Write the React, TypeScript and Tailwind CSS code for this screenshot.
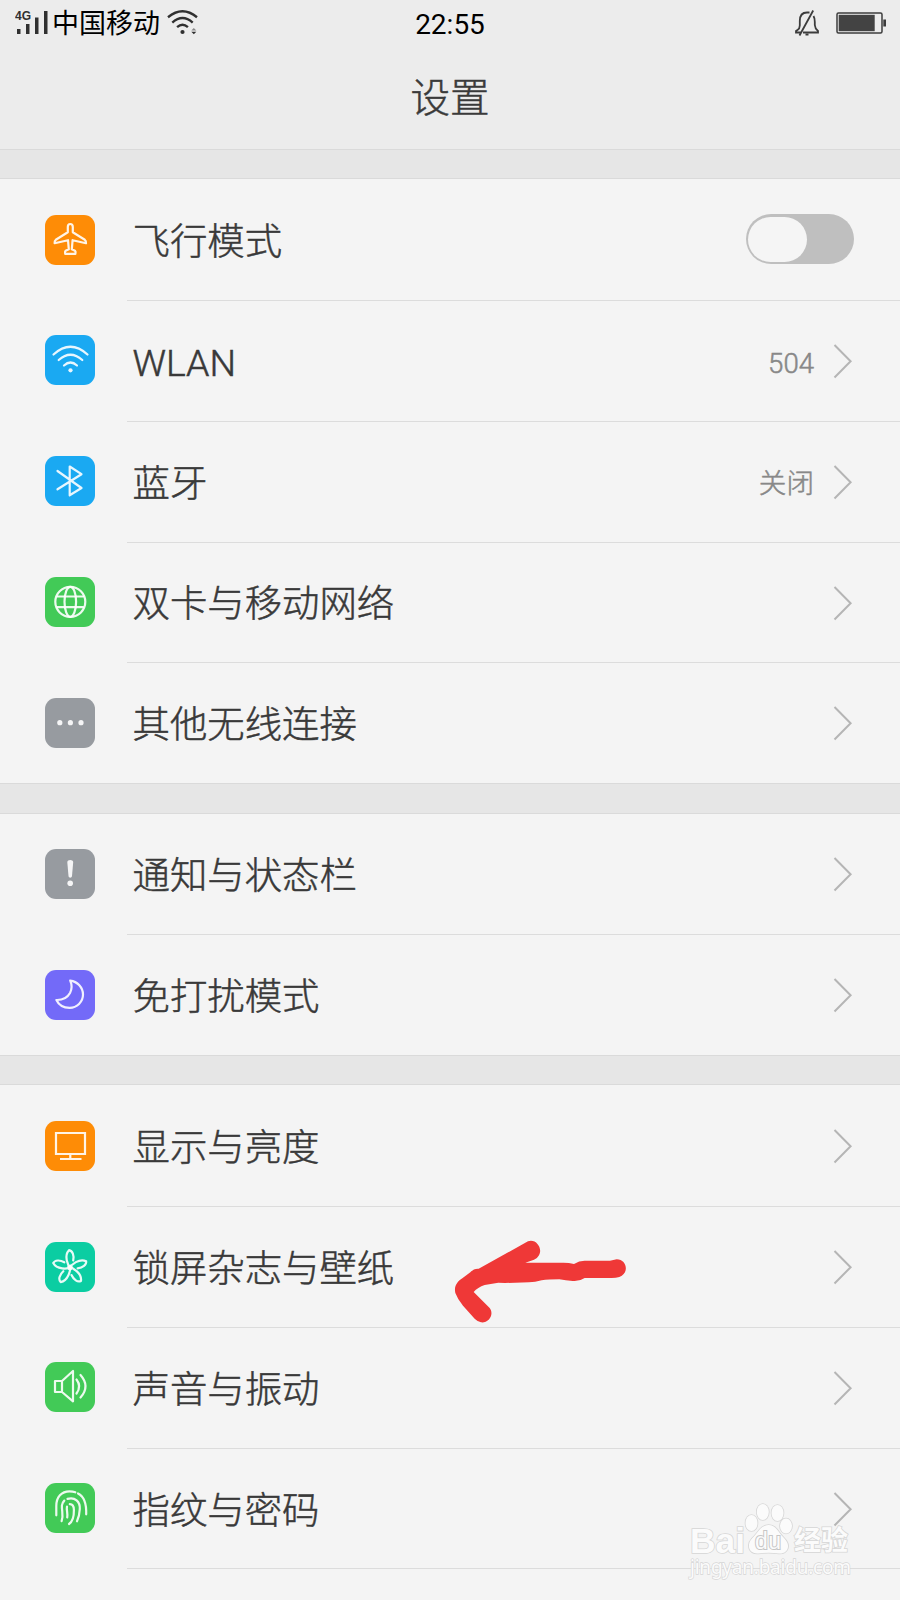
import type { ReactNode } from "react"

interface SettingItem {
  label: string
  color: string
  icon: ReactNode
  value?: string
  toggle?: boolean
}

const PETAL = "M26 27C22.5 23.5 18.8 13.5 24 8.2C27.6 8.8 29.3 13.5 28.2 18.5"

const sections: SettingItem[][] = [
  [
    {
      label: "飞行模式",
      color: "bg-[#fe8c06]",
      toggle: true,
      icon: (
        <path d="M25.2 9C23.6 9 22.8 10.2 22.8 12V17.3L10.8 24.8Q9.4 25.8 9.6 28.2L23 25.2L23.8 34.3L20.6 35.8Q19.6 37 20.2 38.8H30.4Q31 37 30 35.8L26.8 34.3L27.6 25.2L41 28.2Q41.2 25.8 39.8 24.8L27.8 17.3V12C27.8 10.2 26.8 9 25.2 9Z" />
      ),
    },
    {
      label: "WLAN",
      color: "bg-[#1aa9f2]",
      value: "504",
      icon: (
        <>
          <path d="M8.5 19.5Q25.5 4 42.5 19.5M13.7 25Q25.5 14.5 37.3 25M19 30.5Q25.5 24.5 32 30.5" />
          <circle cx="25.5" cy="35.3" r="2.1" fill="currentColor" stroke="none" />
        </>
      ),
    },
    {
      label: "蓝牙",
      color: "bg-[#1aa9f2]",
      value: "关闭",
      icon: <path d="M12.5 15L36.5 32L24.7 39.3V10.5L36.5 18.2L12.5 33.3" />,
    },
    {
      label: "双卡与移动网络",
      color: "bg-[#42ca57]",
      icon: (
        <>
          <circle cx="25.3" cy="24.8" r="15" />
          <ellipse cx="25.3" cy="24.8" rx="5.8" ry="15" />
          <path d="M12.5 19.5H38M12.5 30.2H38" />
        </>
      ),
    },
    {
      label: "其他无线连接",
      color: "bg-[#979ba0]",
      icon: (
        <g fill="currentColor" stroke="none">
          <circle cx="14.8" cy="24.7" r="2.6" />
          <circle cx="25.4" cy="24.7" r="2.6" />
          <circle cx="36" cy="24.7" r="2.6" />
        </g>
      ),
    },
  ],
  [
    {
      label: "通知与状态栏",
      color: "bg-[#979ba0]",
      icon: (
        <g fill="currentColor" stroke="none">
          <path d="M22.3 13C22.3 10.2 28.2 10.2 28.2 13L27 27C26.7 29.2 23.8 29.2 23.5 27Z" />
          <circle cx="25.2" cy="34.2" r="2.8" />
        </g>
      ),
    },
    {
      label: "免打扰模式",
      color: "bg-[#736af8]",
      icon: (
        <path d="M25.2 10.6C32.5 11.5 38 17.5 38 24.6C38 32 32 37.8 24.6 37.8C18.5 37.8 13.8 35 11.4 30C17.5 30.2 22.5 27.5 25 23C27 19 27 14.5 25.2 10.6Z" />
      ),
    },
  ],
  [
    {
      label: "显示与亮度",
      color: "bg-[#fe8c06]",
      icon: <path d="M11 12H40V33H11ZM25.3 33V37.5M15 38H36.5" strokeLinejoin="miter" strokeLinecap="butt" />,
    },
    {
      label: "锁屏杂志与壁纸",
      color: "bg-[#0bcda2]",
      icon: (
        <>
          <path d={PETAL} />
          <path d={PETAL} transform="rotate(72 25 25.5)" />
          <path d={PETAL} transform="rotate(144 25 25.5)" />
          <path d={PETAL} transform="rotate(216 25 25.5)" />
          <path d={PETAL} transform="rotate(288 25 25.5)" />
        </>
      ),
    },
    {
      label: "声音与振动",
      color: "bg-[#42ca57]",
      icon: (
        <path d="M10 19H17V30H10ZM17 19L28 9V39.3L17 30M31.5 17.5Q36.8 24.3 31.5 31.5M35.5 13Q45.5 24.3 35.5 35.5" />
      ),
    },
    {
      label: "指纹与密码",
      color: "bg-[#42ca57]",
      icon: (
        <>
          <path d="M11.3 32.3V23C11.3 14 16.5 8.3 24.5 8.3C27 8.3 28.8 8.7 30.3 9.3M33 10.4C40.5 14 41.5 22.5 41.2 31.3" />
          <path d="M16.6 38.2C18.8 32 16.6 28.5 16.9 22.5Q17.2 19.7 19.3 17.6M22.5 15.9C30 13.8 35.2 18.5 34.8 26Q34.5 33 32 38.3" />
          <path d="M22.2 34.5C23 30 21.2 27 22 23.5M24.8 21.2C28 21.2 28.9 23.5 28.9 27C29 33 27.8 38.5 24 41" />
        </>
      ),
    },
  ],
]

const StatusBar = () => (
  <div className="flex h-[46px] items-center justify-between pr-[13px] pl-[15px]">
    <div className="flex w-[380px] items-center">
      <svg width="36" height="26" viewBox="0 0 36 26" fill="#303030">
        <text x="0" y="10" fontSize="12" fontWeight="700" fontFamily="Liberation Sans">
          4G
        </text>
        <rect x="2" y="19" width="3.5" height="5" />
        <rect x="11" y="14" width="3.5" height="10" />
        <rect x="20" y="7.5" width="3.5" height="16.5" />
        <rect x="29" y="1" width="3.5" height="23" />
      </svg>
      <span className="mt-[2px] ml-[1px] text-[27px] leading-none text-black">中国移动</span>
      <svg className="ml-[6px]" width="34" height="26" viewBox="0 0 34 26" fill="none" stroke="#303030" strokeWidth="2.4">
        <path d="M2 7.2Q16.5-4.6 31 7.2M6.3 12.6Q16.5 3.6 26.7 12.6M11.1 17.2Q16.5 12.4 21.9 17.2" />
        <circle cx="16.5" cy="22" r="2.1" fill="#303030" stroke="none" />
        <path d="M25.3 20.6L27.8 18L30.3 20.6Z" fill="#888" stroke="none" />
        <path d="M25.3 21.8L27.8 24.2L30.3 21.8Z" fill="#303030" stroke="none" />
      </svg>
    </div>
    <span className="mt-[4px] mr-[2px] text-[28px] leading-none text-black">22:55</span>
    <div className="flex w-[380px] items-center justify-end">
      <svg width="26" height="28" viewBox="0 0 26 28" fill="none" stroke="#3c3c3c" strokeWidth="1.8">
        <path d="M3.5 21Q5.8 19.5 5.8 16.5V12C5.8 6 8 3.5 13 3.5H15.5M19.5 7Q20.8 9 20.8 13V16Q21 19.5 24 22V23.5H9M6.5 23.5H2V22L3.5 21M19.2 1.5L5.5 26.5M11.5 25.6H14.5" />
      </svg>
      <svg className="ml-[16px]" width="51" height="24" viewBox="0 0 51 24" fill="none">
        <rect x="1" y="2" width="45" height="20" rx="1.5" stroke="#3c3c3c" strokeWidth="1.5" />
        <rect x="2.7" y="3.8" width="36" height="16.4" fill="#434343" />
        <rect x="47.3" y="8.5" width="2.7" height="7" fill="#3c3c3c" />
      </svg>
    </div>
  </div>
)

const Toggle = () => (
  <div className="mr-[46px] mb-[2px] h-[50px] w-[108px] rounded-full bg-[#bfbfbf] py-[2.5px] pl-[2px]">
    <div className="h-[45px] w-[59px] rounded-full bg-[#f5f5f5]" />
  </div>
)

const Chevron = () => (
  <svg className="mr-[47px] ml-[19px]" width="20" height="36" viewBox="0 0 20 36" fill="none" stroke="#b5b5b5" strokeWidth="2">
    <path d="M1.5 2L17.6 18.2L1.5 34.5" />
  </svg>
)

const Row = ({ item, first }: { item: SettingItem; first: boolean }) => (
  <div className="flex h-[120.8px] items-stretch pl-[45px]">
    <div className={`mr-[32px] h-[50px] w-[50px] shrink-0 self-center rounded-[11px] ${item.color}`}>
      <svg
        className="text-white/90"
        width="50"
        height="50"
        viewBox="0 0 50 50"
        fill="none"
        stroke="currentColor"
        strokeWidth="2.2"
        strokeLinecap="round"
        strokeLinejoin="round"
      >
        {item.icon}
      </svg>
    </div>
    <div className={`flex flex-1 items-center border-t pl-[5.5px] ${first ? "border-transparent" : "border-[#dcdcdc]"}`}>
      <span className="flex-1 pt-[5px] text-[37.4px] leading-none font-light text-[#393939] [-webkit-text-stroke:0.5px_#393939]">
        {item.label}
      </span>
      {item.toggle ? (
        <Toggle />
      ) : (
        <>
          <span className="pt-[5px] text-[27.6px] leading-none font-light text-[#888888] [-webkit-text-stroke:0.5px_#888888]">
            {item.value}
          </span>
          <Chevron />
        </>
      )}
    </div>
  </div>
)

const Arrow = () => (
  <svg
    className="absolute top-[1220px] left-[430px]"
    width="220"
    height="120"
    viewBox="0 0 660 360"
    fill="#ef3837"
  >
    <path d="M294 64C319 55 340 87 326 107Q322 115 312 119L286 128H400Q417 128 432 132Q447 122 464 122H540L560 118C592 119 598 160 568 171Q558 174 545 174H464Q448 185 428 183Q407 182 388 178Q355 178 335 181Q315 187 297 187L225 189L205 188L164 195Q143 202 131 216L179 264C194 284 175 310 153 307Q143 305 134 296L99 257Q83 238 76 219C71 198 83 184 97 175L121 157Q131 145 146 146Z" />
  </svg>
)

const Watermark = () => (
  <svg
    className="absolute top-[1480px] left-[670px]"
    width="230"
    height="120"
    viewBox="0 0 230 120"
    fill="#fbfbfb"
    stroke="#d6d6d6"
    strokeWidth="1.6"
    paintOrder="stroke"
    fontFamily="Liberation Sans, Noto Sans CJK SC, sans-serif"
  >
    <text x="20" y="73" fontSize="35" fontWeight="700" textLength="55" lengthAdjust="spacingAndGlyphs">
      Bai
    </text>
    <ellipse cx="81.5" cy="43" rx="6" ry="8" />
    <ellipse cx="92.8" cy="32" rx="6" ry="8" />
    <ellipse cx="107.5" cy="33" rx="6" ry="8" />
    <ellipse cx="116" cy="46" rx="6" ry="7.5" />
    <path d="M98.5 45C106 45 108 52 114 58C122 66 117 74 109 73.5Q98.5 72 88 73.5C79 74 76 65 82 58.5C88 53 91 45 98.5 45Z" />
    <text x="85" y="69" fontSize="23" textLength="26" stroke="#c6c6c6" strokeWidth="2">
      du
    </text>
    <text x="124" y="70" fontSize="27" fontWeight="700">
      经验
    </text>
    <text x="20" y="94" fontSize="19" fontFamily="Noto Sans" textLength="161" strokeWidth="1.3">
      jingyan.baidu.com
    </text>
  </svg>
)

const App = () => {
  return (
    <div className="relative h-[1600px] w-[900px] overflow-hidden bg-[#f4f4f4] font-['Roboto','Noto_Sans_CJK_SC',sans-serif]">
      <header className="h-[149px] bg-[#ececec]">
        <StatusBar />
        <h1 className="pt-[33px] text-center text-[39.5px] leading-none font-light text-[#3a3a3a] [-webkit-text-stroke:0.5px_#3a3a3a]">
          设置
        </h1>
      </header>

      {sections.map((items) => (
        <section key={items[0].label}>
          <div className="h-[30.3px] border-y border-[#dadada] bg-[#e6e6e6]" />
          {items.map((item, index) => (
            <Row key={item.label} item={item} first={index === 0} />
          ))}
        </section>
      ))}
      <div className="-mt-px ml-[127px] border-t border-[#dcdcdc]" />

      <Arrow />
      <Watermark />
    </div>
  )
}

export default App
